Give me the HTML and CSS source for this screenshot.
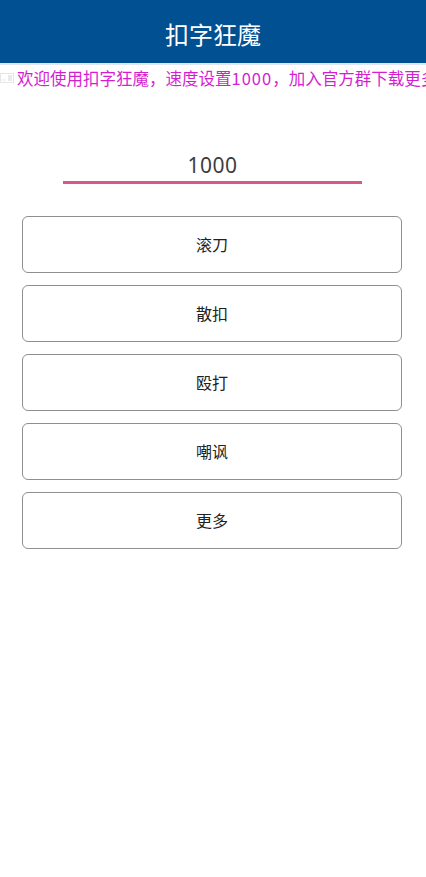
FILE: index.html
```html
<!DOCTYPE html>
<html lang="zh">
<head>
<meta charset="utf-8">
<title>扣字狂魔</title>
<link rel="stylesheet" href="styles.css">
</head>
<body>
<header class="appbar">扣字狂魔</header>
<div class="notice">
  <svg class="notice-icon" viewBox="0 0 16 12" aria-hidden="true">
    <rect x="0.5" y="1.5" width="13" height="9" fill="none" stroke="#e6e6e6"/>
    <path d="M8 4h4M8 6h4M8 8h4" stroke="#d6d6d6" fill="none"/>
    <path d="M2 8h4" stroke="#e6e6e6" fill="none"/>
  </svg>
  <span class="notice-text">欢迎使用扣字狂魔，速度设置<span class="notice-num">1000</span>，加入官方群下载更多</span>
</div>
<main class="content">
  <div class="speed"><span class="speed-value">1000</span></div>
  <nav class="actions">
    <button class="action">滚刀</button>
    <button class="action">散扣</button>
    <button class="action">殴打</button>
    <button class="action">嘲讽</button>
    <button class="action">更多</button>
  </nav>
</main>
</body>
</html>
```
FILE: styles.css
```css
* { box-sizing: border-box; }
html, body { margin: 0; padding: 0; background: #fff; }
body {
  width: 426px;
  height: 877px;
  overflow: hidden;
  font-family: "Noto Sans CJK SC", "Noto Sans", sans-serif;
}
.appbar {
  height: 65px;
  padding-top: 5px;
  background: #005092;
  border-bottom: 2px solid #dfe6ee;
  color: #fff;
  font-size: 24px;
  line-height: 32px;
  display: flex;
  align-items: center;
  justify-content: center;
}
.notice {
  height: 26px;
  display: flex;
  align-items: center;
  overflow: hidden;
  white-space: nowrap;
}
.notice-icon {
  width: 16px;
  height: 12px;
  flex: none;
  margin-right: 1px;
}
.notice-text {
  color: #d41fd0;
  font-size: 16.5px;
  line-height: 26px;
}
.notice-num {
  letter-spacing: 1px;
}
.content {
  padding: 60px 24px 0 22px;
}
.speed {
  width: 299px;
  height: 33px;
  margin-left: 41px;
  border-bottom: 3px solid #d9588c;
  text-align: center;
}
.speed-value {
  display: block;
  color: #3d3d3d;
  font-family: "Noto Sans", sans-serif;
  font-size: 21px;
  line-height: 28px;
  letter-spacing: 0.5px;
}
.actions {
  margin-top: 32px;
  display: flex;
  flex-direction: column;
  gap: 12px;
}
.action {
  height: 57px;
  width: 380px;
  padding: 0 0 2px;
  background: #fff;
  border: 1px solid #8f8f8f;
  border-radius: 6px;
  color: #222;
  font-family: inherit;
  font-size: 16px;
}
```
